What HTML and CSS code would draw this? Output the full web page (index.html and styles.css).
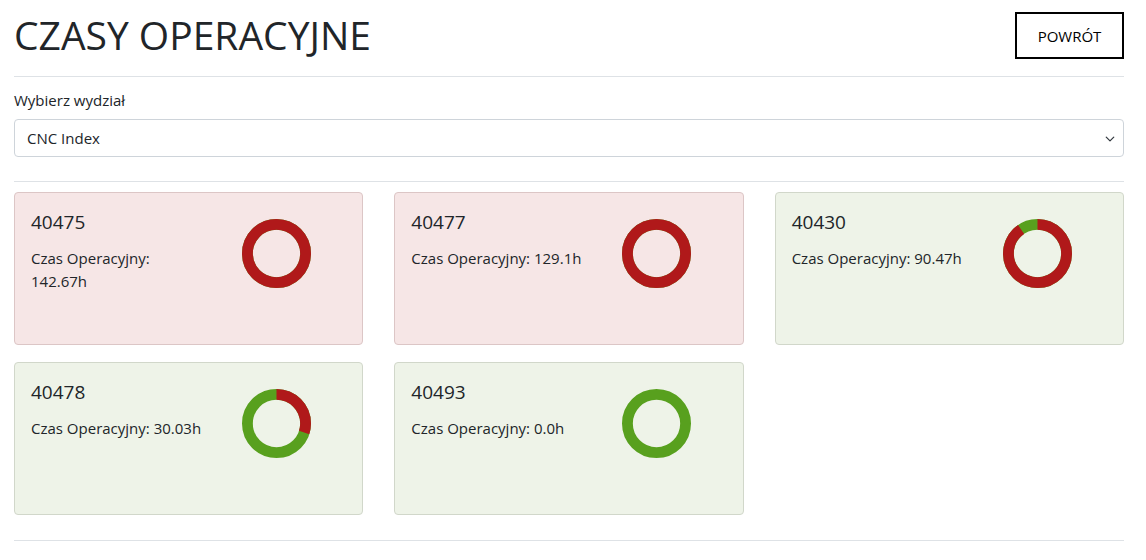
FILE: index.html
```html
<!DOCTYPE html>
<html lang="pl">

<head>
    <meta charset="UTF-8">
    <meta name="viewport" content="width=device-width, initial-scale=1.0">
    <title>Czasy operacyjne</title>
    <link rel="stylesheet" href="styles.css">
</head>

<body>
    <div class="page">
        <header class="page-header">
            <h1 class="page-title">CZASY OPERACYJNE</h1>
            <button class="back-button" type="button">POWRÓT</button>
        </header>
        <hr class="divider">

        <label class="field-label" for="department">Wybierz wydział</label>
        <div class="select-wrap">
            <select class="select" id="department">
                <option>CNC Index</option>
            </select>
            <svg class="select-arrow" viewBox="0 0 16 16">
                <path d="M2 5l6 6 6-6" fill="none" stroke="#343a40" stroke-width="2" stroke-linecap="round" stroke-linejoin="round" />
            </svg>
        </div>
        <hr class="divider divider-cards">

        <div class="machines">
            <div class="machine over">
                <div class="machine-info">
                    <h5 class="machine-id">40475</h5>
                    <p class="machine-time">Czas Operacyjny: 142.67h</p>
                </div>
                <div class="machine-chart">
                    <svg class="donut" viewBox="0 0 70 70">
                        <circle class="donut-free" cx="35" cy="35" r="29.5" />
                        <circle class="donut-used" cx="35" cy="35" r="29.5" pathLength="100" stroke-dasharray="100 100" />
                    </svg>
                </div>
            </div>
            <div class="machine over">
                <div class="machine-info">
                    <h5 class="machine-id">40477</h5>
                    <p class="machine-time">Czas Operacyjny: 129.1h</p>
                </div>
                <div class="machine-chart">
                    <svg class="donut" viewBox="0 0 70 70">
                        <circle class="donut-free" cx="35" cy="35" r="29.5" />
                        <circle class="donut-used" cx="35" cy="35" r="29.5" pathLength="100" stroke-dasharray="100 100" />
                    </svg>
                </div>
            </div>
            <div class="machine ok">
                <div class="machine-info">
                    <h5 class="machine-id">40430</h5>
                    <p class="machine-time">Czas Operacyjny: 90.47h</p>
                </div>
                <div class="machine-chart">
                    <svg class="donut" viewBox="0 0 70 70">
                        <circle class="donut-free" cx="35" cy="35" r="29.5" />
                        <circle class="donut-used" cx="35" cy="35" r="29.5" pathLength="100" stroke-dasharray="90.47 100" />
                    </svg>
                </div>
            </div>
            <div class="machine ok">
                <div class="machine-info">
                    <h5 class="machine-id">40478</h5>
                    <p class="machine-time">Czas Operacyjny: 30.03h</p>
                </div>
                <div class="machine-chart">
                    <svg class="donut" viewBox="0 0 70 70">
                        <circle class="donut-free" cx="35" cy="35" r="29.5" />
                        <circle class="donut-used" cx="35" cy="35" r="29.5" pathLength="100" stroke-dasharray="30.03 100" />
                    </svg>
                </div>
            </div>
            <div class="machine ok">
                <div class="machine-info">
                    <h5 class="machine-id">40493</h5>
                    <p class="machine-time">Czas Operacyjny: 0.0h</p>
                </div>
                <div class="machine-chart">
                    <svg class="donut" viewBox="0 0 70 70">
                        <circle class="donut-free" cx="35" cy="35" r="29.5" />
                        <circle class="donut-used" cx="35" cy="35" r="29.5" pathLength="100" stroke-dasharray="0 100" />
                    </svg>
                </div>
            </div>
        </div>
        <hr class="divider divider-bottom">
    </div>
</body>

</html>
```

FILE: styles.css
```css
* {
    box-sizing: border-box;
}

body {
    margin: 0;
    background-color: #fff;
    color: #212529;
    font-family: "Open Sans", "Noto Sans", sans-serif;
    font-size: 16px;
    line-height: 1.5;
}

.page {
    padding: 12px 22px 0 14px;
}

.page-header {
    display: flex;
    justify-content: space-between;
    align-items: center;
}

.page-title {
    margin: 0;
    font-size: 39px;
    font-weight: 400;
    line-height: 1.2;
}

.back-button {
    width: 109px;
    height: 47px;
    background: #fff;
    border: 2px solid #000;
    border-radius: 0;
    font-family: inherit;
    font-size: 15px;
    color: #000;
    cursor: pointer;
}

.divider {
    margin: 17px 0 12px;
    border: 0;
    border-top: 1px solid #dee2e6;
}

.field-label {
    display: block;
    margin-bottom: 7px;
    font-size: 15px;
}

.select-wrap {
    position: relative;
}

.select {
    display: block;
    width: 100%;
    height: 38px;
    padding: 0 36px 0 12px;
    border: 1px solid #ced4da;
    border-radius: 4px;
    background: #fff;
    font-family: inherit;
    font-size: 15px;
    color: #212529;
    -webkit-appearance: none;
    appearance: none;
}

.select-arrow {
    position: absolute;
    top: 15px;
    right: 9px;
    width: 10px;
    height: 10px;
    pointer-events: none;
}

.divider-cards {
    margin: 24px 0 10px;
}

.machines {
    display: grid;
    grid-template-columns: repeat(3, 1fr);
    column-gap: 31px;
    row-gap: 17px;
}

.machine {
    display: flex;
    height: 153px;
    padding: 16px;
    border: 1px solid;
    border-radius: 4px;
}

.machine.over {
    background-color: #f6e6e6;
    border-color: #dcc6c6;
}

.machine.ok {
    background-color: #eef3e8;
    border-color: #d1d7ca;
}

.machine-info {
    width: 176px;
    flex-shrink: 0;
}

.machine-id {
    margin: 2px 0 14px;
    font-size: 19px;
    font-weight: 400;
    line-height: 1.2;
}

.machine-time {
    margin: 0;
    font-size: 15px;
}

.machine-chart {
    flex: 1;
    display: flex;
    justify-content: center;
    padding-top: 10px;
}

.donut {
    width: 69px;
    height: 69px;
    transform: rotate(-90deg);
}

.donut circle {
    fill: none;
    stroke-width: 11;
}

.donut-free {
    stroke: #58a01e;
}

.donut-used {
    stroke: #b0191a;
}

.divider-bottom {
    margin: 25px 0 0;
}
```
